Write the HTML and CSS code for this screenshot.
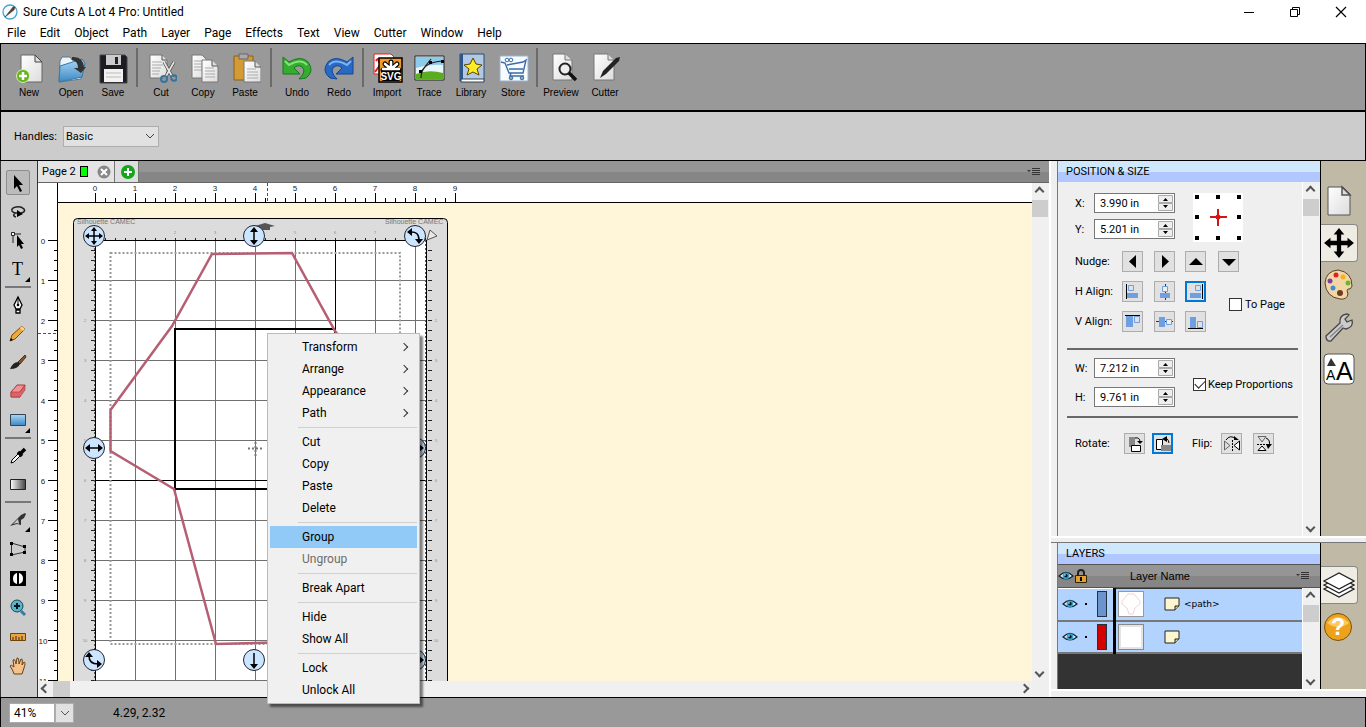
FILE: index.html
```html
<!DOCTYPE html>
<html lang="en">
<head>
    <meta charset="UTF-8">
    <meta name="viewport" content="width=device-width, initial-scale=1.0">
    <title>Sure Cuts A Lot 4 Pro: Untitled</title>
    <link rel="stylesheet" href="styles.css">
</head>
<body>
    <!-- shared symbols -->
    <svg class="defs" width="0" height="0" aria-hidden="true">
        <defs>
            <linearGradient id="paper" x1="0" y1="0" x2="1" y2="1"><stop offset="0" stop-color="#fff"/><stop offset="1" stop-color="#dcdcdc"/></linearGradient>
            <linearGradient id="blue" x1="0" y1="0" x2="0" y2="1"><stop offset="0" stop-color="#a9d8f8"/><stop offset="1" stop-color="#3d87c4"/></linearGradient>
            <linearGradient id="fade"><stop offset="0" stop-color="#fff"/><stop offset="1" stop-color="#444"/></linearGradient>
            <symbol id="eye" viewBox="0 0 16 12">
                <path d="M1 6Q8-1 15 6Q8 12 1 6Z" fill="#e8f6ff" stroke="#123" stroke-width="1.2"/>
                <circle cx="8" cy="5.8" r="3.4" fill="#2fa3c8"/><circle cx="8" cy="5.8" r="1.7" fill="#012"/><circle cx="7" cy="5" r=".8" fill="#fff"/>
            </symbol>
            <symbol id="note" viewBox="0 0 16 14">
                <path d="M1 1H15V9L11 13H1Z" fill="#fbf6cf" stroke="#222"/><path d="M15 9H11V13" fill="#d8cd8c" stroke="#222"/>
            </symbol>
            <symbol id="spin" viewBox="0 0 15 16">
                <path d="M.5 .5H14.5V7.5H.5ZM.5 8.5H14.5V15.5H.5Z" fill="#eee" stroke="#aaa"/>
                <path d="M5 6L7.5 3L10 6ZM5 10L7.5 13L10 10Z"/>
            </symbol>
            <symbol id="cross-arrows" viewBox="0 0 30 30">
                <path d="M15 1L20 7H17V13H23V10L29 15L23 20V17H17V23H20L15 29L10 23H13V17H7V20L1 15L7 10V13H13V7H10Z"/>
            </symbol>
        </defs>
    </svg>

    <header class="titlebar">
        <svg width="18" height="18" viewBox="0 0 18 18"><circle cx="9" cy="9" r="7" fill="#f4fbff" stroke="#4aa6cc" stroke-width="1.3"/><path d="M4 14L12 4L14 4L13 7Z" fill="#6e3b2a" stroke="#333" stroke-width=".5"/></svg>
        <h1>Sure Cuts A Lot 4 Pro: Untitled</h1>
        <div class="window-buttons">
            <button aria-label="Minimize"><svg width="12" height="12"><path d="M1 6.5H11" stroke="#000"/></svg></button>
            <button aria-label="Restore"><svg width="12" height="12"><path d="M1.5 3.5H8.5V10.5H1.5ZM3.5 3V1.5H10.5V8.5H9" fill="none" stroke="#000"/></svg></button>
            <button aria-label="Close"><svg width="12" height="12"><path d="M1 1L11 11M11 1L1 11" stroke="#000" stroke-width="1.2"/></svg></button>
        </div>
    </header>

    <nav class="menubar">
        <button>File</button><button>Edit</button><button>Object</button><button>Path</button><button>Layer</button><button>Page</button><button>Effects</button><button>Text</button><button>View</button><button>Cutter</button><button>Window</button><button>Help</button>
    </nav>

    <div class="toolbar">
        <button><svg width="32" height="32" viewBox="0 0 32 32"><path d="M8 2H22L29 9V29H8Z" fill="url(#paper)" stroke="#666"/><path d="M22 2V9H29Z" fill="#ddd" stroke="#444"/><circle cx="10" cy="23" r="6.5" fill="#63b51d" stroke="#d6f0b0"/><path d="M10 19V27M6 23H14" stroke="#fff" stroke-width="2.5"/></svg>New</button>
        <button><svg width="32" height="32" viewBox="0 0 32 32"><path d="M5 8L7 4H15L17 7H28V13L26 26L4 29Z" fill="#eaf4fb" stroke="#5a7890"/><path d="M5 13L27 6L30 10L27 24L4 29Z" fill="url(#blue)" stroke="#3779a8"/><path d="M17 4Q28 3 29 14H31L26 20L19 15H23Q23 8 17 7Z" fill="#333"/></svg>Open</button>
        <button><svg width="32" height="32" viewBox="0 0 32 32"><path d="M3 2H28L30 4V30H3Z" fill="#1c1d22" stroke="#444"/><path d="M9 2H24V12H9Z" fill="#ccc"/><path d="M18 4H21V11H18Z" fill="#222"/><path d="M7 16H26V29H7Z" fill="#f2f2f2"/><path d="M9 20H24M9 24H24" stroke="#bbb"/></svg>Save</button>
        <span class="sep"></span>
        <button><svg width="32" height="32" viewBox="0 0 32 32"><path d="M5 2H17L22 7V25H5Z" fill="url(#paper)" stroke="#777"/><path d="M17 2V7H22" fill="#ddd" stroke="#555"/><path d="M7 9H17M7 12H18M7 15H16M7 18H15M7 21H14" stroke="#aaa"/><path d="M19 9L28 25M29 9L20 25" stroke="#444" stroke-width="3.2"/><path d="M19 9L28 25M29 9L20 25" stroke="#e4e4e4" stroke-width="1.8"/><circle cx="19" cy="26" r="3" fill="none" stroke="#34749f" stroke-width="2"/><circle cx="29" cy="25" r="2.7" fill="none" stroke="#34749f" stroke-width="2"/></svg>Cut</button>
        <button><svg width="32" height="32" viewBox="0 0 32 32"><path d="M5 2H15L20 7V25H5Z" fill="url(#paper)" stroke="#777"/><path d="M7 8H16M7 11H16M7 14H16M7 17H16" stroke="#aaa"/><path d="M15 7H25L31 13V29H15Z" fill="url(#paper)" stroke="#777"/><path d="M25 7V13H31" fill="#ddd" stroke="#555"/><path d="M18 15H27M18 18H28M18 21H28M18 24H28" stroke="#aaa"/></svg>Copy</button>
        <button><svg width="32" height="32" viewBox="0 0 32 32"><path d="M5 3H24V27H5Z" fill="#d49a34" stroke="#8b6117"/><path d="M10 1H19V6H10Z" fill="#aaa" stroke="#666"/><path d="M15 8H26L32 14V29H15Z" fill="url(#paper)" stroke="#777"/><path d="M26 8V14H32" fill="#ddd" stroke="#555"/><path d="M18 16H27M18 19H29M18 22H29M18 25H29" stroke="#aaa"/></svg>Paste</button>
        <span class="sep wide"></span>
        <button><svg width="32" height="32" viewBox="0 0 32 32"><path d="M2 4L8 9Q20 2 27 9Q34 18 25 25L18 26Q26 18 21 14Q17 11 13 15L19 21H2Z" fill="#35ad30" stroke="#17791d"/><path d="M4 8L8 12Q20 5 26 12" fill="none" stroke="#8be07e" stroke-width="2"/></svg>Undo</button>
        <button><svg width="32" height="32" viewBox="0 0 32 32"><path d="M30 4L24 9Q12 2 5 9Q-2 18 7 25L14 26Q6 18 11 14Q15 11 19 15L13 21H30Z" fill="#2869c6" stroke="#174791"/><path d="M28 8L24 12Q12 5 6 12" fill="none" stroke="#7fb2f0" stroke-width="2"/></svg>Redo</button>
        <span class="sep"></span>
        <button><svg width="32" height="32" viewBox="0 0 32 32"><path d="M3 1H20L23 4V21H3Z" fill="#fff" stroke="#e02020"/><path d="M4 19L9 12M5 8Q8 3 8 10" stroke="#e02020" stroke-width="2" fill="none"/><path d="M8 5H31V29H8Z" fill="#f39a25" stroke="#000" stroke-width="1.5"/><rect x="10" y="17" width="20" height="11" rx="3"/><g stroke="#000" stroke-width="5" stroke-linecap="round"><path d="M20 17V9M20 17L14 11M20 17L26 11M20 17H12M20 17H28"/></g><g stroke="#fff" stroke-width="2.6" stroke-linecap="round"><path d="M20 16V9M20 16L14 11M20 16L26 11M20 16H12M20 16H28"/></g><text x="20" y="27" class="svg-logo">SVG</text></svg>Import</button>
        <button><svg width="32" height="32" viewBox="0 0 32 32"><path d="M2 3H31V27H2Z" fill="#e9f4fb" stroke="#222"/><path d="M3 4H30V12Q18 11 3 15Z" fill="#8ccbea"/><path d="M3 21Q16 16 30 20V26H3Z" fill="#5aad1f"/><path d="M8 25Q8 9 30 8M7 20L18 6" fill="none" stroke="#222" stroke-width="1.2"/><path d="M6 17h3v3h-3zM16 8h3v3h-3zM28 7h3v3h-3z"/></svg>Trace</button>
        <button><svg width="32" height="32" viewBox="0 0 32 32"><path d="M5 1H29V28H5Z" fill="#b3c8e2" stroke="#274d7c"/><path d="M5 1H8V28H5Z" fill="#2f5688"/><path d="M6 26H29V29H6Z" fill="#fff" stroke="#345"/><path d="M18 5L21 11L27 12L22 16L24 22L18 19L12 22L14 16L9 12L15 11Z" fill="#ffec22" stroke="#554400"/></svg>Library</button>
        <button><svg width="32" height="32" viewBox="0 0 32 32"><path d="M3 3H31V28H3Z" fill="#f7faff" stroke="#9ab2cc"/><path d="M4 9L8 10L12 20H26L29 7L26 9L10 12M12 16H26M14 20L13 23H27" fill="none" stroke="#3b6da3" stroke-width="1.4"/><circle cx="14" cy="25" r="1.8" fill="#8ab" stroke="#3b6da3"/><circle cx="25" cy="25" r="1.8" fill="#8ab" stroke="#3b6da3"/><circle cx="10" cy="7" r="1.8" fill="none" stroke="#3b6da3"/><circle cx="14" cy="7" r="1.8" fill="none" stroke="#3b6da3"/></svg>Store</button>
        <span class="sep"></span>
        <button><svg width="32" height="32" viewBox="0 0 32 32"><path d="M8 1H20L27 7V27H8Z" fill="url(#paper)" stroke="#777"/><path d="M20 1V7H27" fill="#ddd" stroke="#777"/><circle cx="20" cy="16" r="5.5" fill="#eee" stroke="#222" stroke-width="2"/><path d="M24 20L31 27" stroke="#111" stroke-width="3.5"/></svg>Preview</button>
        <button class="last"><svg width="32" height="32" viewBox="0 0 32 32"><path d="M5 1H19L25 7V27H5Z" fill="url(#paper)" stroke="#777"/><path d="M19 1V7H25" fill="#ddd" stroke="#777"/><path d="M11 25L14 18L27 5L31 4L30 8L17 21Z" fill="#222"/></svg>Cutter</button>
    </div>

    <div class="options">
        <label for="handles">Handles:</label>
        <select id="handles"><option>Basic</option></select>
    </div>

    <main class="main">
        <aside class="toolbox">
            <button class="active" aria-label="Select"><svg width="20" height="20"><path d="M6 2V16L9 13L12 19L14 18L11 12H15Z"/></svg></button>
            <button aria-label="Lasso"><svg width="20" height="20"><path d="M13 11Q18 10 16 7Q13 4 8 5Q3 6 4 9Q5 11 9 11M7 11Q4 14 8 15" fill="none" stroke="#222" stroke-width="1.6"/><path d="M9 8L15 12L9 15Z"/></svg></button>
            <button aria-label="Edit points"><svg width="20" height="20"><path d="M3.5 1.5H6.5V4.5H3.5ZM7 3H13M5 5V12" fill="#fff" stroke="#222"/><path d="M9 4V16L11 14L13 18L15 17L13 13H16Z"/></svg></button>
            <button class="more" aria-label="Text"><span class="glyph">T</span></button>
            <hr>
            <button aria-label="Pen"><svg width="20" height="20"><path d="M10 2L14 10L12 14H8L6 10ZM8 15H12V18H8Z" fill="#fff" stroke="#000" stroke-width="1.3"/><path d="M10 2V9" stroke="#000"/><circle cx="10" cy="10" r="1.3"/></svg></button>
            <button aria-label="Pencil"><svg width="20" height="20"><path d="M2 17L4 11L14 2L17 5L7 15Z" fill="#efa83a" stroke="#7c4a0d"/><path d="M12 4L14 2L17 5L15 7Z" fill="#f4d39a"/><path d="M2 17L3 14L5 16Z"/></svg></button>
            <button aria-label="Brush"><svg width="20" height="20"><path d="M10 9L17 2L18 4L12 11Z" fill="#8a5328" stroke="#4b2a0e"/><path d="M2 16Q5 9 10 9L12 11Q10 16 2 16Z" fill="#222"/></svg></button>
            <button aria-label="Eraser"><svg width="20" height="20"><path d="M3 10L9 3H17L12 10V15H3Z" fill="#f19396" stroke="#a5383c"/><path d="M3 10H12L17 3V8L12 15H3Z" fill="#dd6367" stroke="#a5383c" stroke-width=".6"/></svg></button>
            <button class="more" aria-label="Shape"><svg width="20" height="20"><path d="M2.5 3.5H17.5V14.5H2.5Z" fill="url(#blue)" stroke="#345"/></svg></button>
            <hr>
            <button aria-label="Eyedropper"><svg width="20" height="20"><path d="M3 17L4 14L11 7L13 9L6 16Z" fill="#fff" stroke="#000"/><path d="M10 6L14 10M13 7L17 3" stroke="#000" stroke-width="3.5"/></svg></button>
            <button aria-label="Gradient"><svg width="20" height="20"><path d="M2.5 4.5H17.5V14.5H2.5Z" fill="url(#fade)" stroke="#222"/></svg></button>
            <hr>
            <button class="more" aria-label="Knife"><svg width="20" height="20"><path d="M2 16L11 7L13 5L17 3L18 4L16 8L13 10V15L9 14Z" fill="#333"/><path d="M5 14L10 9L11 14L9 13Z" fill="#ccc"/></svg></button>
            <button aria-label="Distort"><svg width="20" height="20"><path d="M3.5 4L17 8L17 13L3.5 16Z" fill="none" stroke="#333"/><path d="M2 3h3v3h-3zM15 6h3v3h-3zM15 12h3v3h-3zM2 14h3v3h-3z"/></svg></button>
            <button aria-label="Stencil"><svg width="20" height="20"><path d="M2 3H18V18H2Z"/><path d="M9 5Q5 6 5 10.5T9 16ZM11 5Q15 6 15 10.5T11 16Z" fill="#fff"/></svg></button>
            <button aria-label="Zoom"><svg width="20" height="20"><circle cx="9" cy="9" r="6" fill="#55b4c5" stroke="#245"/><path d="M9 6V12M6 9H12" stroke="#012" stroke-width="2"/><path d="M13 14L17 18" stroke="#367ba0" stroke-width="3"/></svg></button>
            <button aria-label="Ruler"><svg width="20" height="20"><path d="M2.5 7.5H17.5V14.5H2.5Z" fill="#e7a640" stroke="#6d450b"/><path d="M5 11V14M8 10V14M11 11V14M14 10V14" stroke="#422"/></svg></button>
            <button aria-label="Hand"><svg width="20" height="20"><path d="M6 19Q5 15 2 11Q3 9 6 12L5 5Q7 3 8 9L9 3Q11 2 11 9L13 4Q15 3 14 10L16 7Q18 7 16 13L14 19Z" fill="#f5c28a" stroke="#6b4015"/></svg></button>
        </aside>

        <section class="workspace">
            <div class="tabs">
                <div class="tab">Page 2 <i class="swatch"></i>
                    <button aria-label="Close page"><svg width="14" height="14"><circle cx="7" cy="7" r="6.5" fill="#888"/><path d="M4 4L10 10M10 4L4 10" stroke="#fff" stroke-width="2"/></svg></button>
                </div>
                <button class="tab-add" aria-label="Add page"><svg width="16" height="16"><circle cx="8" cy="8" r="7" fill="#14a51d"/><path d="M8 4V12M4 8H12" stroke="#fff" stroke-width="2"/></svg></button>
                <button class="list-menu" aria-label="Page menu"><svg width="14" height="10"><path d="M0 3H4L2 5ZM5 1H13V2H5ZM5 3H13V4H5ZM5 5H13V6H5ZM5 7H13V8H5Z" fill="#333"/></svg></button>
            </div>
            <div class="view">
                <svg class="canvas" width="100%" height="100%">
                    <defs>
                        <pattern id="ticks-x" x="95" y="193" width="40" height="10" patternUnits="userSpaceOnUse"><path d="M.5 0V10M10.5 5V10M20.5 5V10M30.5 5V10" stroke="#000"/></pattern>
                        <pattern id="ticks-y" x="48" y="240" width="10" height="40" patternUnits="userSpaceOnUse"><path d="M0 .5H10M6 10.5H10M6 20.5H10M6 30.5H10" stroke="#000"/></pattern>
                        <pattern id="mat-x" x="95" y="237" width="10" height="4" patternUnits="userSpaceOnUse"><path d="M.5 1V4" stroke="#222"/></pattern>
                        <pattern id="mat-y" x="91" y="240" width="10" height="10" patternUnits="userSpaceOnUse"><path d="M0 .5H10" stroke="#222"/></pattern>
                        <pattern id="grid" x="95" y="240" width="40" height="40" patternUnits="userSpaceOnUse"><path d="M.5 0V40M0 .5H40" stroke="#707070" fill="none"/></pattern>
                    </defs>
                    <g transform="translate(-38 -183)">
                        <rect x="38" y="183" width="100%" height="100%" fill="#fff"/>
                        <rect x="58" y="203" width="100%" height="100%" fill="#fff6d9"/>
                        <!-- cutting mat -->
                        <rect x="73.5" y="218.5" width="374" height="1000" rx="4" fill="#dcdcdc" stroke="#000"/>
                        <rect x="95" y="240" width="332" height="900" fill="#fff"/>
                        <rect x="95" y="240" width="332" height="900" fill="url(#grid)"/>
                        <rect x="95" y="237" width="332" height="4" fill="url(#mat-x)"/>
                        <rect x="91" y="250" width="4" height="900" fill="url(#mat-y)"/>
                        <rect x="428" y="250" width="4" height="900" fill="url(#mat-y)"/>
                        <path d="M95 240.5H427M95.5 240V1000M426.5 240V1000M335.5 240V329M95 480.5H427" stroke="#000" fill="none"/>
                        <path d="M94.5 240V1000M425.5 240V1000" stroke="#555" stroke-dasharray="2 2"/>
                        <g class="mat-brand"><text x="77" y="224">Silhouette CAMEC</text><text x="385" y="224">Silhouette CAMEC</text></g>
                        <g id="matNumbers" class="mat-numbers"></g>
                        <path d="M255 226L265 223L275 226L270 227V230H260L258 227Z" fill="#555"/>
                        <path d="M430 230L437 236L427 240Z" fill="#e8e8e8" stroke="#555"/>
                        <!-- artwork -->
                        <rect x="175" y="329" width="160" height="160" fill="none" stroke="#000" stroke-width="2"/>
                        <path d="M110.5 253H400V644H110.5Z" fill="none" stroke="#999" stroke-width="2" stroke-dasharray="2 2"/>
                        <path d="M110.5 410L172 326L212 254L292 253L335 331L399 410V451L335 489L293 642L216 644L174 489L110.5 451Z" fill="none" stroke="#b65f74" stroke-width="2.5"/>
                        <path d="M248 448.5H263M255.5 442V456" stroke="#777" stroke-width="2" stroke-dasharray="2 2"/>
                        <!-- handles -->
                        <g class="handle">
                            <circle cx="94" cy="236" r="10.5"/><circle cx="254" cy="236" r="10.5"/><circle cx="415" cy="236" r="10.5"/>
                            <circle cx="94" cy="448" r="10.5"/><circle cx="415" cy="448" r="10.5"/>
                            <circle cx="94" cy="660" r="10.5"/><circle cx="254" cy="660" r="10.5"/><circle cx="415" cy="660" r="10.5"/>
                        </g>
                        <g class="handle-arrow">
                            <path d="M94 230V242M88 236H100M254 231V241M88 448H100M409 448H421M254 653V665M409 660H421M410 232Q419 231 419 240M89 656Q89 664 98 664" fill="none"/>
                            <path class="tip" d="M94 227l3 4h-6zM94 245l3-4h-6zM85 236l4-3v6zM103 236l-4-3v6zM254 227l4 5h-8zM254 245l4-5h-8zM85 448l5-4v8zM103 448l-5-4v8zM424 448l-5-4v8zM254 669l4-5h-8zM424 660l-5-4v8zM407 232l5-4v8zM419 244l4-5h-8zM89 652l4 5h-8zM102 664l-5-4v8z"/>
                        </g>
                        <!-- rulers -->
                        <rect x="38" y="183" width="100%" height="20" fill="#fff"/>
                        <rect x="38" y="183" width="20" height="100%" fill="#fff"/>
                        <rect x="95" y="193" width="361" height="10" fill="url(#ticks-x)"/>
                        <rect x="48" y="240" width="10" height="441" fill="url(#ticks-y)"/>
                        <rect x="57" y="202" width="100%" height="1"/><rect x="57" y="183" width="1" height="100%"/>
                        <path d="M267.5 183V202M38 333.5H57" stroke="#d0104a" stroke-dasharray="3 2"/>
                        <g id="rulerNumbers" class="ruler-numbers"></g>
                    </g>
                </svg>
                <div class="vscroll"><button class="up" aria-label="Scroll up"></button><i></i><button class="down" aria-label="Scroll down"></button></div>
                <div class="hscroll"><button class="left" aria-label="Scroll left"></button><i></i><button class="right" aria-label="Scroll right"></button></div>
            </div>
        </section>

        <div class="docks">
            <section class="dock dock-position">
                <div class="panel">
                    <h2>POSITION &amp; SIZE</h2>
                    <div class="panel-scroll">
                        <div class="position">
                            <div class="row xy">
                                <div class="fields">
                                    <label for="x">X:</label><span class="spin"><input id="x" value="3.990 in"><button aria-label="Step X"><svg width="15" height="16"><use href="#spin"/></svg></button></span>
                                    <label for="y">Y:</label><span class="spin"><input id="y" value="5.201 in"><button aria-label="Step Y"><svg width="15" height="16"><use href="#spin"/></svg></button></span>
                                </div>
                                <svg class="anchor" width="50" height="49"><rect width="50" height="49" fill="#fff"/><path d="M2 2h4v4h-4zM23 2h4v4h-4zM44 2h4v4h-4zM2 22h4v4h-4zM44 22h4v4h-4zM2 43h4v4h-4zM23 43h4v4h-4zM44 43h4v4h-4z"/><path d="M17 24H34M25 16V33" stroke="#d31515" stroke-width="2"/><circle cx="25" cy="24" r="2.5" fill="#d31515"/></svg>
                            </div>
                            <div class="row align">
                                <div class="align-grid">
                                    <span>Nudge:</span>
                                    <button aria-label="Left"><svg width="19" height="19"><path d="M13 3V16L6 9.5Z"/></svg></button>
                                    <button aria-label="Right"><svg width="19" height="19"><path d="M7 3V16L14 9.5Z"/></svg></button>
                                    <button aria-label="Up"><svg width="19" height="19"><path d="M3 13H17L10 6Z"/></svg></button>
                                    <button aria-label="Down"><svg width="19" height="19"><path d="M3 7H17L10 14Z"/></svg></button>
                                    <span>H Align:</span>
                                    <button aria-label="Align left"><svg width="19" height="19"><path d="M4 11H15V16H4Z" fill="#6f9fe0"/><path d="M5.5 3.5H10.5V8.5H5.5Z" fill="none" stroke="#6f9fe0"/><path d="M3.5 2V17" stroke="#000"/></svg></button>
                                    <button aria-label="Align centre"><svg width="19" height="19"><path d="M10.5 2V18" stroke="#333"/><path d="M5 11H15V16H5Z" fill="#6f9fe0"/><path d="M7.5 4.5H12.5V9.5H7.5Z" fill="#eee" stroke="#6f9fe0"/></svg></button>
                                    <button class="on" aria-label="Align right"><svg width="19" height="19"><path d="M4 11H15V16H4Z" fill="#6f9fe0"/><path d="M9.5 3.5H14.5V8.5H9.5Z" fill="none" stroke="#6f9fe0"/><path d="M16.5 2V17" stroke="#000"/></svg></button>
                                    <i></i>
                                    <span>V Align:</span>
                                    <button aria-label="Align top"><svg width="19" height="19"><path d="M3 4H10V15H3Z" fill="#6f9fe0"/><path d="M11.5 4.5H16.5V10.5H11.5Z" fill="none" stroke="#6f9fe0"/><path d="M2 3.5H17" stroke="#000"/></svg></button>
                                    <button aria-label="Align middle"><svg width="19" height="19"><path d="M1 9.5H18" stroke="#333"/><path d="M4 5H10V15H4Z" fill="#6f9fe0"/><path d="M11.5 7.5H16.5V12.5H11.5Z" fill="#eee" stroke="#6f9fe0"/></svg></button>
                                    <button aria-label="Align bottom"><svg width="19" height="19"><path d="M4 5H10V16H4Z" fill="#6f9fe0"/><path d="M11.5 9.5H16.5V15.5H11.5Z" fill="none" stroke="#6f9fe0"/><path d="M2 16.5H17" stroke="#000"/></svg></button>
                                    <i></i>
                                </div>
                                <label class="check"><input type="checkbox">To Page</label>
                            </div>
                            <hr>
                            <div class="row size">
                                <div class="fields">
                                    <label for="w">W:</label><span class="spin"><input id="w" value="7.212 in"><button aria-label="Step W"><svg width="15" height="16"><use href="#spin"/></svg></button></span>
                                    <label for="h">H:</label><span class="spin"><input id="h" value="9.761 in"><button aria-label="Step H"><svg width="15" height="16"><use href="#spin"/></svg></button></span>
                                </div>
                                <label class="check"><input type="checkbox" checked>Keep Proportions</label>
                            </div>
                            <hr>
                            <div class="row rotate">
                                <span>Rotate:</span>
                                <button aria-label="Rotate left"><svg width="19" height="19"><path d="M4 3H10V13H4Z" fill="#888"/><path d="M6.5 11.5H15.5V17.5H6.5Z" fill="#fff" stroke="#000"/><path d="M10 4Q15 3 15 8" fill="none" stroke="#000"/><path d="M12 7H18L15 10Z"/></svg></button>
                                <button class="on" aria-label="Rotate right"><svg width="19" height="19"><path d="M3.5 5.5H9.5V15.5H3.5Z" fill="#fff" stroke="#000"/><path d="M8 11H18V17H8Z" fill="#888"/><path d="M11 5Q15 3 16 9" fill="none" stroke="#000"/><path d="M9 5L14 2V8Z"/></svg></button>
                                <span class="flip">Flip:</span>
                                <button aria-label="Flip horizontal"><svg width="19" height="19"><path d="M2.5 7V16L8 11.5Z" fill="#ddd" stroke="#666"/><path d="M17.5 7V16L12 11.5Z" fill="#fff" stroke="#000"/><path d="M10.5 6V18" stroke="#000" stroke-dasharray="2 1"/><path d="M4 6Q8 0 14 5" fill="none" stroke="#000"/><path d="M12 2L17 6H12Z"/></svg></button>
                                <button aria-label="Flip vertical"><svg width="19" height="19"><path d="M4 2.5H12L8 8Z" fill="#ddd" stroke="#666"/><path d="M4 16.5H12L8 12Z" fill="#fff" stroke="#000"/><path d="M3 10.5H15" stroke="#000" stroke-dasharray="2 1"/><path d="M12 4Q17 6 15 12" fill="none" stroke="#000"/><path d="M12 10L18 10L14 15Z"/></svg></button>
                            </div>
                        </div>
                        <div class="vscroll"><button class="up" aria-label="Scroll up"></button><i></i><button class="down" aria-label="Scroll down"></button></div>
                    </div>
                </div>
                <nav class="dock-tabs">
                    <button aria-label="Document"><svg width="32" height="32" viewBox="0 0 32 32"><path d="M5 2H20L27 9V30H5Z" fill="url(#paper)" stroke="#555"/><path d="M19 2V10H27Z" fill="#ddd" stroke="#555" stroke-width="1.5"/></svg></button>
                    <button class="active" aria-label="Position and size"><svg width="32" height="32"><use href="#cross-arrows"/></svg></button>
                    <button aria-label="Colour"><svg width="32" height="32" viewBox="0 0 32 32"><path d="M2 14Q3 2 15 1Q29 3 29 17Q28 21 25 20Q23 21 25 25Q24 31 17 30Q3 28 2 14Z" fill="#f3d6a8" stroke="#59401f"/><circle cx="13" cy="6" r="2.5" fill="#d22"/><circle cx="20" cy="8" r="2.5" fill="#f2b21a"/><circle cx="7" cy="12" r="2.5" fill="#7b3fa0"/><circle cx="10" cy="19" r="2.5" fill="#3b8fd8"/><circle cx="25" cy="14" r="2.5" fill="#6db52f"/><circle cx="17" cy="24" r="3" fill="#6d3d1c"/></svg></button>
                    <button aria-label="Tools"><svg width="32" height="32" viewBox="0 0 32 32"><path d="M3 25L17 12Q16 4 24 3L26 4L22 8L24 11L29 9Q31 16 23 18L20 17L8 30Q3 31 3 25Z" fill="#ccc" stroke="#444" stroke-width="1.3"/><path d="M7 26L20 14" stroke="#888" stroke-width="1.5"/></svg></button>
                    <button aria-label="Text settings"><svg width="34" height="32" viewBox="0 0 34 32"><rect x="1" y="1" width="30" height="30" rx="4" fill="#fff" stroke="#555"/><path d="M4 13L8 5L13 13Z" fill="#333"/><text x="3" y="27" class="aa-small">A</text><text x="13" y="27" class="aa-big">A</text></svg></button>
                </nav>
            </section>

            <section class="dock dock-layers">
                <div class="panel">
                    <h2>LAYERS</h2>
                    <div class="layers-head">
                        <svg width="16" height="12"><use href="#eye"/></svg>
                        <svg width="14" height="16"><path d="M4 8V5Q4 2 7 2T10 5V8" fill="none" stroke="#222" stroke-width="2"/><path d="M1.5 7.5H12.5V14.5H1.5Z" fill="#e0a22c" stroke="#332200"/><path d="M6 9H8V13H6Z"/></svg>
                        <span>Layer Name</span>
                        <button class="list-menu" aria-label="Layer menu"><svg width="14" height="10"><path d="M0 3H4L2 5ZM5 1H13V2H5ZM5 3H13V4H5ZM5 5H13V6H5ZM5 7H13V8H5Z" fill="#333"/></svg></button>
                    </div>
                    <div class="panel-scroll">
                        <div class="layer-list">
                            <table>
                                <tr>
                                    <td class="flags"><div><svg width="16" height="12"><use href="#eye"/></svg><b></b><i class="color"></i></div></td>
                                    <td class="thumb"><svg width="26" height="26"><rect x=".5" y=".5" width="25" height="25" fill="#fff" stroke="#999"/><path d="M4 10L10 3H16L22 10V13L17 17L15 23H11L9 17L4 13Z" fill="none" stroke="#f3d3d3"/></svg></td>
                                    <td class="name"><svg width="16" height="14"><use href="#note"/></svg>&lt;path&gt;</td>
                                </tr>
                                <tr>
                                    <td class="flags"><div><svg width="16" height="12"><use href="#eye"/></svg><b></b><i class="color red"></i></div></td>
                                    <td class="thumb"><svg width="26" height="26"><rect x=".5" y=".5" width="25" height="25" fill="#e4e4e4" stroke="#888"/><rect x="3" y="3" width="20" height="20" fill="#fff"/></svg></td>
                                    <td class="name"><svg width="16" height="14"><use href="#note"/></svg></td>
                                </tr>
                            </table>
                        </div>
                        <div class="vscroll"><button class="up" aria-label="Scroll up"></button><i></i><button class="down" aria-label="Scroll down"></button></div>
                    </div>
                </div>
                <nav class="dock-tabs">
                    <button class="active" aria-label="Layers"><svg width="32" height="32" viewBox="0 0 32 32"><g fill="#fff" stroke="#222" stroke-width="1.3"><path d="M1 20L16 13L31 20L16 28Z"/><path d="M1 16L16 9L31 16L16 24Z"/><path d="M1 12L16 4L31 12L16 20Z"/></g></svg></button>
                    <button aria-label="Help"><svg width="32" height="32" viewBox="0 0 32 32"><circle cx="15" cy="16" r="13.5" fill="#eea21c" stroke="#7c5110"/><path d="M4 12Q15 0 26 12Q15 20 4 12Z" fill="#ffc95c"/><text x="15" y="24" class="help-mark">?</text></svg></button>
                </nav>
            </section>
        </div>
    </main>

    <footer class="statusbar">
        <div class="zoom"><input aria-label="Zoom" value="41%"><button aria-label="Zoom levels"><svg width="10" height="6"><path d="M1 1L5 5L9 1" fill="none" stroke="#555"/></svg></button></div>
        <span>4.29, 2.32</span>
    </footer>

    <div class="context-menu" role="menu">
        <button class="sub">Transform</button>
        <button class="sub">Arrange</button>
        <button class="sub">Appearance</button>
        <button class="sub">Path</button>
        <hr>
        <button>Cut</button>
        <button>Copy</button>
        <button>Paste</button>
        <button>Delete</button>
        <hr>
        <button class="hover">Group</button>
        <button disabled>Ungroup</button>
        <hr>
        <button>Break Apart</button>
        <hr>
        <button>Hide</button>
        <button>Show All</button>
        <hr>
        <button>Lock</button>
        <button>Unlock All</button>
    </div>

    <script>
        // numbers along the rulers and the mat, one inch is 40px
        const addText = (parent, x, y, value) => {
            const t = document.createElementNS('http://www.w3.org/2000/svg', 'text');
            t.setAttribute('x', x);
            t.setAttribute('y', y);
            t.textContent = value;
            parent.appendChild(t);
        };
        const ruler = document.getElementById('rulerNumbers');
        const mat = document.getElementById('matNumbers');
        for (let i = 0; i <= 9; i++) addText(ruler, 95 + i * 40, 191, i);
        for (let i = 0; i <= 11; i++) addText(ruler, 43, 244 + i * 40, i);
        for (let i = 2; i <= 7; i++) addText(mat, 95 + i * 40, 234, i);
        for (let i = 2; i <= 10; i++) {
            addText(mat, 85, 242 + i * 40, i);
            addText(mat, 436, 242 + i * 40, i);
        }
    </script>
</body>
</html>
```
FILE: styles.css
```css
* {
    margin: 0;
    padding: 0;
    box-sizing: border-box;
}

body {
    height: 100vh;
    display: flex;
    flex-direction: column;
    overflow: hidden;
    background: #ffffff;
    color: #000;
    font-family: Roboto, 'Open Sans', sans-serif;
    font-size: 12px;
}

button, input, select {
    font: inherit;
    color: inherit;
}

button {
    background: none;
    border: none;
}

svg {
    display: block;
    flex: none;
}

i {
    font-style: normal;
}

.defs {
    position: absolute;
}

/* Title and menus */
.titlebar {
    height: 23px;
    flex: none;
    display: flex;
    align-items: center;
    gap: 4px;
    padding-left: 1px;
}

.titlebar h1 {
    font-size: 12px;
    font-weight: 400;
}

.window-buttons {
    margin-left: auto;
    margin-right: 2px;
    display: flex;
}

.window-buttons button {
    width: 46px;
    height: 20px;
    display: flex;
    justify-content: center;
    align-items: center;
}

.menubar {
    height: 20px;
    flex: none;
    display: flex;
    align-items: center;
    gap: 14px;
    padding-left: 7px;
}

.toolbar {
    height: 69px;
    flex: none;
    display: flex;
    align-items: flex-start;
    padding: 9px 0 0 7px;
    background: #999;
    border: solid #000;
    border-width: 1px 1px 2px;
    font-family: 'Liberation Sans', sans-serif;
    font-size: 10px;
}

.toolbar button {
    width: 42px;
    display: flex;
    flex-direction: column;
    align-items: center;
    gap: 2px;
    line-height: 12px;
}

.toolbar .last {
    margin-left: 2px;
}

.sep {
    width: 2px;
    height: 39px;
    margin: -5px 2px 0;
    background: #6b6b6b;
}

.sep.wide {
    margin: -5px 4px 0;
}

.svg-logo {
    font: bold 10px 'Liberation Sans', sans-serif;
    fill: #fff;
    text-anchor: middle;
}

.options {
    height: 49px;
    flex: none;
    display: flex;
    align-items: center;
    gap: 6px;
    padding-left: 13px;
    background: #ccc;
    border: solid #000;
    border-width: 0 1px 1px;
    font-size: 11px;
}

.options select {
    width: 96px;
    height: 21px;
    padding: 0 20px 0 2px;
    border: 1px solid #adadad;
    border-radius: 0;
    appearance: none;
    background: #e1e1e1 url("data:image/svg+xml,%3Csvg xmlns='http://www.w3.org/2000/svg' width='10' height='6'%3E%3Cpath d='M1 1L5 5L9 1' fill='none' stroke='%23444'/%3E%3C/svg%3E") no-repeat right 3px center;
}

/* Main area */
.main {
    flex: 1;
    min-height: 0;
    display: flex;
}

.toolbox {
    width: 38px;
    flex: none;
    display: flex;
    flex-direction: column;
    align-items: center;
    padding: 7px 3px 0 0;
    background: #ccc;
    border-left: 1px solid #333;
    border-right: 1px solid #333;
}

.toolbox button {
    position: relative;
    width: 24px;
    height: 25px;
    margin: 2px 0;
    flex: none;
    display: flex;
    align-items: center;
    justify-content: center;
}

.toolbox .active {
    background: #bbb;
    border: 1px solid #8d8d8d;
    border-radius: 2px;
}

.toolbox .more::after {
    content: '';
    position: absolute;
    right: 0;
    bottom: 0;
    border: solid transparent;
    border-width: 0 0 5px 5px;
    border-bottom-color: #000;
}

.toolbox hr {
    width: 26px;
    height: 2px;
    margin: 2px 0;
    flex: none;
    border: none;
    background: #777;
}

.glyph {
    font: 18px 'Liberation Serif', serif;
}

.workspace {
    flex: 1;
    min-width: 0;
    display: flex;
    flex-direction: column;
    background: #efefef;
}

.tabs {
    height: 22px;
    flex: none;
    display: flex;
    background: linear-gradient(#959595 50%, #868686 50%);
    border-bottom: 1px solid #666;
}

.tab {
    width: 77px;
    display: flex;
    align-items: center;
    gap: 4px;
    padding: 0 3px 0 4px;
    background: #e4e4e4;
    border-right: 1px solid #777;
    font-size: 11px;
    white-space: nowrap;
}

.tab button {
    margin-left: auto;
}

.swatch {
    width: 8px;
    height: 11px;
    background: #0f0;
    border: 1px solid #000;
}

.tab-add {
    width: 24px;
    padding-left: 5px;
    background: #dedede;
    border-right: 1px solid #777;
}

.list-menu {
    margin-left: auto;
    margin-right: 8px;
}

.view {
    flex: 1;
    min-height: 0;
    display: grid;
    grid-template-columns: 1fr 17px;
    grid-template-rows: 1fr 16px;
}

.canvas {
    min-width: 0;
    min-height: 0;
    overflow: hidden;
}

.ruler-numbers text {
    font: 8px 'Liberation Sans', sans-serif;
    fill: #222;
    text-anchor: middle;
}

.mat-numbers text {
    font: 4px 'Liberation Sans', sans-serif;
    fill: #888;
    text-anchor: middle;
}

.mat-brand text {
    font: 7px 'Liberation Sans', sans-serif;
    fill: #777;
}

.handle circle {
    fill: #cce6ff;
    stroke: #223;
}

.handle-arrow {
    stroke: #000;
    stroke-width: 1.5;
}

.handle-arrow .tip {
    stroke: none;
}

/* Scrollbars */
.vscroll {
    width: 17px;
    display: flex;
    flex-direction: column;
    background: #f0f0f0;
}

.hscroll {
    display: flex;
    background: #f0f0f0;
}

.vscroll i {
    height: 17px;
    margin-right: 1px;
    background: #cdcdcd;
}

.hscroll i {
    width: 17px;
    background: #cdcdcd;
}

.vscroll button, .hscroll button {
    width: 15px;
    height: 17px;
    display: flex;
    align-items: center;
    justify-content: center;
}

.hscroll button {
    height: 14px;
}

.vscroll .down {
    margin-top: auto;
}

.hscroll .right {
    margin-left: auto;
}

.vscroll button::before, .hscroll button::before {
    content: '';
    width: 5px;
    height: 5px;
    border: solid #555;
    border-width: 2px 0 0 2px;
}

.up::before { transform: rotate(45deg); }
.right::before { transform: rotate(135deg); }
.down::before { transform: rotate(225deg); }
.left::before { transform: rotate(-45deg); }

/* Docked panels */
.docks {
    width: 317px;
    flex: none;
    display: flex;
    flex-direction: column;
    border-left: 2px solid #fff;
    background: #efefef;
}

.dock {
    display: flex;
    min-height: 0;
    border-bottom: 2px solid #fff;
    padding-left: 6px;
}

.dock-position {
    flex: 1;
}

.dock-layers {
    height: 149px;
    flex: none;
    margin: 4px 0 6px;
    border-top: 1px solid #777;
}

.panel {
    flex: 1;
    min-width: 0;
    display: flex;
    flex-direction: column;
    border-left: 1px solid #777;
    border-right: 1px solid #000;
}

.panel h2 {
    height: 21px;
    flex: none;
    padding-left: 8px;
    line-height: 22px;
    font-size: 11px;
    font-weight: 400;
    background: linear-gradient(#d0e8fc 50%, #b0c8ff 50%);
}

.panel-scroll {
    flex: 1;
    min-height: 0;
    display: flex;
}

.panel-scroll .vscroll {
    width: 18px;
    flex: none;
    border-left: 1px solid #fff;
}

.position {
    flex: 1;
    padding: 11px 4px 0 9px;
    font-size: 11px;
}

.position hr {
    height: 2px;
    border: none;
    background: #696969;
}

.row {
    display: flex;
    padding-left: 8px;
}

.xy {
    align-items: flex-start;
}

.fields {
    display: grid;
    grid-template-columns: 19px 81px;
    align-items: center;
    row-gap: 6px;
}

.spin {
    height: 20px;
    display: flex;
    align-items: center;
    padding-right: 1px;
    background: #fff;
    border: 1px solid #777;
}

.spin input {
    flex: 1;
    min-width: 0;
    padding-left: 5px;
    border: none;
    background: none;
}

.anchor {
    margin-left: 18px;
}

.align {
    align-items: center;
    padding-top: 9px;
    padding-bottom: 16px;
}

.align-grid {
    display: grid;
    grid-template-columns: 47px 32px 31px 33px 21px;
    align-items: center;
    row-gap: 9px;
}

.align-grid button, .rotate button {
    width: 21px;
    height: 21px;
    background: #e1e1e1;
    border: 1px solid #adadad;
}

.align-grid .on, .rotate .on {
    border: 2px solid #0078d7;
}

.on svg {
    margin: -1px;
}

.check {
    display: flex;
    align-items: center;
    gap: 3px;
    white-space: nowrap;
}

.align .check {
    margin: 26px 0 0 -10px;
}

.size {
    padding-top: 8px;
    padding-bottom: 9px;
}

.size .fields {
    row-gap: 9px;
}

.size .check {
    margin-left: 18px;
    padding-top: 4px;
    gap: 2px;
}

.check input {
    width: 13px;
    height: 13px;
    appearance: none;
    background: #fff;
    border: 1px solid #333;
}

.check input:checked::before {
    content: '';
    display: block;
    width: 9px;
    height: 5px;
    margin: 1px;
    border: solid #222;
    border-width: 0 0 1px 1px;
    transform: rotate(-45deg);
}

.rotate {
    align-items: center;
    padding-top: 15px;
}

.rotate span {
    width: 49px;
}

.rotate button {
    margin-right: 7px;
}

.rotate .flip {
    width: 29px;
    margin-left: 12px;
}

.rotate .flip ~ button {
    margin-right: 11px;
}

.dock-tabs {
    width: 45px;
    flex: none;
    display: flex;
    flex-direction: column;
    gap: 4px;
    padding-top: 21px;
    background: #bfb9a5;
}

.dock-tabs button {
    width: 37px;
    height: 38px;
    flex: none;
    display: flex;
    align-items: center;
    padding-left: 2px;
}

.dock-tabs .active {
    background: #efece3;
    border: 1px solid #888;
    border-left: none;
    border-radius: 0 4px 4px 0;
}

.dock-layers .dock-tabs {
    padding-top: 23px;
}

.aa-small {
    font: 14px 'Liberation Sans', sans-serif;
}

.aa-big {
    font: 25px 'Liberation Sans', sans-serif;
}

.help-mark {
    font: bold 23px 'Liberation Sans', sans-serif;
    fill: #fff;
    text-anchor: middle;
}

.layers-head {
    height: 24px;
    flex: none;
    display: flex;
    align-items: center;
    background: linear-gradient(#959595 50%, #868686 50%);
    border: solid #555;
    border-width: 1px 0;
    font-family: 'Liberation Sans', sans-serif;
    font-size: 11px;
}

.layers-head span {
    margin-left: 42px;
}

.layers-head .list-menu {
    margin-right: 10px;
}

.layer-list {
    flex: 1;
    background: #333;
}

.layer-list table {
    width: 100%;
    border-collapse: collapse;
}

.layer-list td {
    height: 32px;
    background: #b3d3ff;
    border-bottom: 2px solid #777;
}

.layer-list .flags {
    width: 56px;
    border-right: 3px solid #000;
    border-top: 1px solid #fff;
}

.flags div {
    display: flex;
    align-items: center;
    padding-left: 4px;
}

.flags b {
    width: 2px;
    height: 2px;
    margin: 0 10px 0 7px;
    background: #000;
}

.color {
    width: 10px;
    height: 26px;
    background: #6c94cc;
    border: 1px solid #234;
}

.color.red {
    background: #d40000;
}

.layer-list .thumb {
    width: 50px;
    padding-left: 2px;
}

.layer-list .name {
    font: 9px 'DejaVu Sans', sans-serif;
}

.name svg {
    display: inline-block;
    vertical-align: middle;
    margin-right: 4px;
}

/* Status bar */
.statusbar {
    height: 30px;
    flex: none;
    display: flex;
    align-items: center;
    gap: 39px;
    padding-left: 8px;
    background: #999;
    border: solid #000;
    border-width: 1px 1px 0;
}

.zoom {
    display: flex;
    height: 20px;
}

.zoom input {
    width: 46px;
    padding-left: 4px;
    border: 1px solid #aaa;
    background: #fff;
}

.zoom button {
    width: 19px;
    display: flex;
    align-items: center;
    justify-content: center;
    background: #e1e1e1;
    border: 1px solid #adadad;
}

/* Context menu over the canvas */
.context-menu {
    position: absolute;
    left: 267px;
    top: 333px;
    width: 153px;
    padding: 2px;
    background: #f0f0f0;
    border: 1px solid #bbb;
    box-shadow: 3px 3px 2px rgba(0, 0, 0, 0.5);
}

.context-menu button {
    width: 100%;
    height: 22px;
    display: flex;
    align-items: center;
    justify-content: space-between;
    padding: 0 10px 0 32px;
}

.context-menu .hover {
    background: #91c9f7;
}

.context-menu button:disabled {
    color: #6d6d6d;
}

.context-menu .sub::after {
    content: '';
    width: 5px;
    height: 5px;
    border: solid #333;
    border-width: 1px 1px 0 0;
    transform: rotate(45deg);
}

.context-menu hr {
    height: 1px;
    margin: 3px 0 3px 28px;
    border: none;
    background: #d0d0d0;
}
```
